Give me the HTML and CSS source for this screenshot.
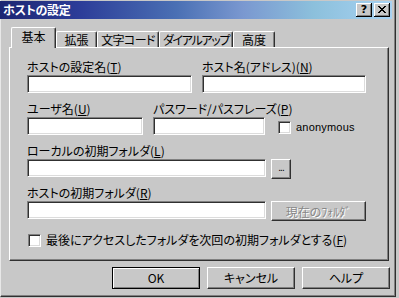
FILE: index.html
```html
<!DOCTYPE html>
<html lang="ja">
<head>
<meta charset="utf-8">
<title>ホストの設定</title>
<link rel="stylesheet" href="styles.css">
</head>
<body>
<div class="window">
  <div class="titlebar">
    <span class="title">ホストの設定</span>
    <div class="tb-buttons">
      <span class="tb-btn help">?</span>
      <span class="tb-btn close">
        <svg width="8" height="7" viewBox="0 0 8 7"><path d="M0 0h2v1h1v1h2V1h1V0h2v1H7v1H6v1H5v1h1v1h1v1h1v1H6V6H5V5H3v1H2v1H0V6h1V5h1V4h1V3H2V2H1V1H0z" fill="#000"/></svg>
      </span>
    </div>
  </div>

  <div class="tabs">
    <div class="tab sel t-kihon">基本</div>
    <div class="tab t-kakucho">拡張</div>
    <div class="tab t-moji">文字コード</div>
    <div class="tab t-dial">ダイアルアップ</div>
    <div class="tab t-kodo">高度</div>
  </div>

  <div class="panel">
    <div class="row">
      <div class="field w-name">
        <div class="label">ホストの設定名(<u>T</u>)</div>
        <div class="edit"></div>
      </div>
      <div class="field w-host">
        <div class="label">ホスト名(アドレス)(<u>N</u>)</div>
        <div class="edit"></div>
      </div>
    </div>

    <div class="row">
      <div class="field w-user">
        <div class="label">ユーザ名(<u>U</u>)</div>
        <div class="edit"></div>
      </div>
      <div class="field w-pass">
        <div class="label">パスワード/パスフレーズ(<u>P</u>)</div>
        <div class="edit"></div>
      </div>
      <div class="anon">
        <span class="check"></span>
        <span class="anon-text">anonymous</span>
      </div>
    </div>

    <div class="row">
      <div class="field">
        <div class="label">ローカルの初期フォルダ(<u>L</u>)</div>
        <div class="line">
          <div class="edit w-path"></div>
          <div class="btn btn-dots">...</div>
        </div>
      </div>
    </div>

    <div class="row">
      <div class="field">
        <div class="label">ホストの初期フォルダ(<u>R</u>)</div>
        <div class="line">
          <div class="edit w-path"></div>
          <div class="btn btn-cur disabled">現在のﾌｫﾙﾀﾞ</div>
        </div>
      </div>
    </div>

    <div class="checkrow">
      <span class="check"></span>
      <span class="check-text">最後にアクセスしたフォルダを次回の初期フォルダとする(<u>F</u>)</span>
    </div>
  </div>

  <div class="buttons">
    <div class="btn dlg default">OK</div>
    <div class="btn dlg">キャンセル</div>
    <div class="btn dlg">ヘルプ</div>
  </div>
</div>
</body>
</html>
```

FILE: styles.css
```css
* {
  box-sizing: border-box;
}

html, body {
  margin: 0;
  padding: 0;
}

body {
  width: 399px;
  height: 298px;
  overflow: hidden;
  background: #c8c8c8;
  font-family: "Noto Sans CJK JP", sans-serif;
  font-size: 12px;
  font-feature-settings: "palt";
  color: #000;
}

.window {
  width: 396px;
  height: 297px;
  background: #c8c8c8;
  border-left: 1px solid #e8e8e8;
  border-right: 1px solid #303030;
  border-bottom: 1px solid #303030;
  box-shadow: inset -1px -1px #808080;
  padding-top: 1px;
}

.titlebar {
  height: 18px;
  width: 392px;
  margin-left: -1px;
  display: flex;
  align-items: center;
  padding-left: 3px;
  background: linear-gradient(to right, #1c2672 0%, #2c3c98 20%, #4a70b4 45%, #7a98d0 62%, #8cc0dc 80%, #a8d2f2 100%);
}

.title {
  color: #fff;
  font-weight: bold;
  font-size: 12px;
  line-height: 18px;
  letter-spacing: -0.3px;
}

.tb-buttons {
  margin-left: auto;
  margin-right: 2px;
  display: flex;
  gap: 2px;
}

.tb-btn {
  width: 16px;
  height: 14px;
  background: #c8c8c8;
  box-shadow: inset -1px -1px #000, inset 1px 1px #fff, inset -2px -2px #808080;
  display: flex;
  align-items: center;
  justify-content: center;
  font-family: "DejaVu Sans", sans-serif;
  font-weight: bold;
  font-size: 11px;
  line-height: 14px;
  padding-bottom: 1px;
}

.tabs {
  margin-top: 8px;
  height: 20px;
  display: flex;
  align-items: flex-end;
  padding-left: 12px;
}

.tab {
  height: 16px;
  border-top: 1px solid #fff;
  border-left: 1px solid #fff;
  border-right: 1px solid #303030;
  border-radius: 2px 2px 0 0;
  box-shadow: inset -1px 0 #808080;
  display: flex;
  align-items: center;
  justify-content: center;
  line-height: 14px;
  white-space: nowrap;
  background: #c8c8c8;
  overflow: hidden;
}

.tab.sel {
  height: 21px;
  margin-bottom: -1px;
  margin-left: -2px;
  position: relative;
  z-index: 1;
  padding-bottom: 2px;
}

.t-kihon { width: 45px; }
.t-kakucho { width: 41px; }
.t-moji { width: 62px; letter-spacing: -0.6px; }
.t-dial { width: 74px; letter-spacing: -1.3px; }
.t-kodo { width: 42px; }

.panel {
  margin-left: 8px;
  width: 380px;
  height: 214px;
  border-top: 1px solid #fff;
  border-left: 1px solid #fff;
  border-right: 1px solid #303030;
  border-bottom: 1px solid #303030;
  box-shadow: inset -1px -1px #808080;
  padding: 12px 0 0 17px;
}

.row {
  display: flex;
  gap: 10px;
  margin-bottom: 9px;
}

.field {
  display: flex;
  flex-direction: column;
}

.label {
  line-height: 14px;
  height: 14px;
  margin-bottom: 1px;
  white-space: nowrap;
}

.label u, .check-text u {
  text-decoration-thickness: 1px;
  text-underline-offset: 1px;
}

.edit {
  height: 18px;
  background: #fff;
  border-top: 1px solid #808080;
  border-left: 1px solid #808080;
  border-right: 1px solid #fff;
  border-bottom: 1px solid #fff;
  box-shadow: inset 1px 1px #303030, inset -1px -1px #dcdcdc;
}

.w-name { width: 165px; }
.w-host { width: 164px; }
.w-user { width: 116px; }
.w-pass { width: 112px; }
.w-path { width: 239px; }

.anon {
  align-self: flex-end;
  display: flex;
  align-items: center;
  gap: 5px;
  margin-left: 3px;
  margin-bottom: 1px;
}

.anon-text {
  font-family: "Liberation Sans", sans-serif;
  font-size: 11px;
  letter-spacing: 0.2px;
  line-height: 14px;
}

.check {
  width: 13px;
  height: 13px;
  background: #fff;
  border-top: 1px solid #808080;
  border-left: 1px solid #808080;
  border-right: 1px solid #fff;
  border-bottom: 1px solid #fff;
  box-shadow: inset 1px 1px #303030, inset -1px -1px #dcdcdc;
  flex: none;
}

.line {
  display: flex;
  gap: 5px;
  height: 18px;
}

.btn {
  background: #c8c8c8;
  border-top: 1px solid #fff;
  border-left: 1px solid #fff;
  border-right: 1px solid #303030;
  border-bottom: 1px solid #303030;
  box-shadow: inset -1px -1px #808080;
  display: flex;
  align-items: center;
  justify-content: center;
  white-space: nowrap;
}

.btn-dots {
  width: 20px;
  height: 20px;
  font-family: "Liberation Sans", sans-serif;
  font-size: 10px;
  letter-spacing: -1px;
  padding-bottom: 3px;
}

.btn-cur {
  width: 95px;
  height: 20px;
}

.disabled {
  color: #888;
  text-shadow: 1px 1px #fff;
}

.checkrow {
  display: flex;
  align-items: center;
  gap: 5px;
  margin-top: 14px;
  margin-left: 1px;
}

.check-text {
  line-height: 14px;
  white-space: nowrap;
}

.buttons {
  display: flex;
  gap: 7px;
  margin-top: 6px;
  padding-left: 111px;
}

.btn.dlg {
  width: 88px;
  height: 22px;
  line-height: 14px;
}

.btn.default {
  border: 1px solid #000;
  box-shadow: inset 1px 1px #fff, inset -1px -1px #808080;
}
```
